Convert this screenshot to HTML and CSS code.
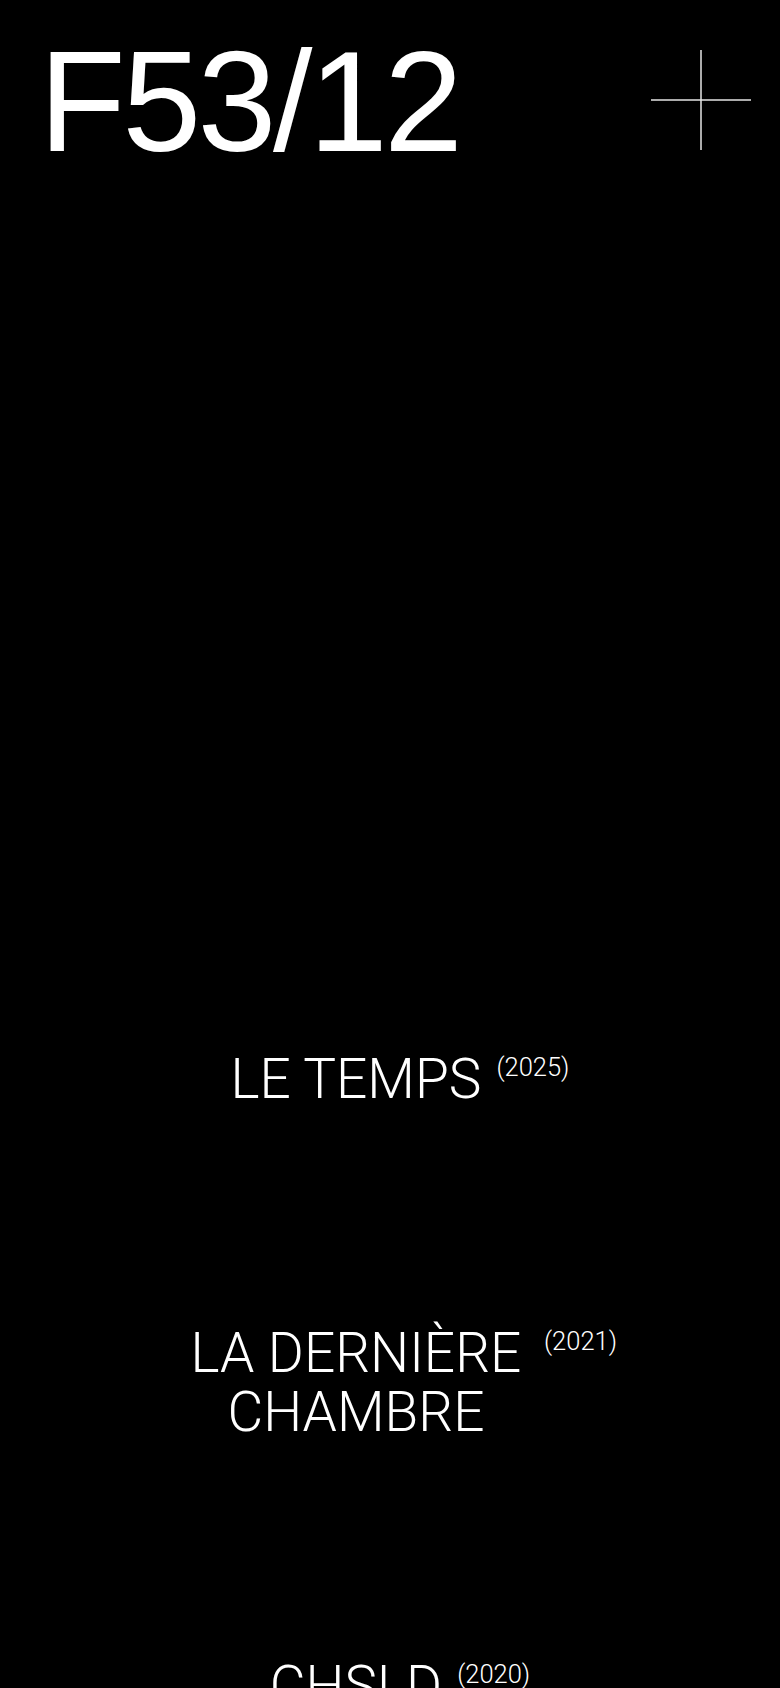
FILE: index.html
```html
<!DOCTYPE html>
<html lang="fr">
<head>
<meta charset="utf-8">
<title>F53/12</title>
<link rel="stylesheet" href="styles.css">
</head>
<body>
<header class="site-header">
  <div class="logo">F53/12</div>
  <button class="menu-toggle" aria-label="Menu">
    <svg viewBox="0 0 100 100" width="100" height="100" aria-hidden="true">
      <line x1="50" y1="0" x2="50" y2="100" />
      <line x1="0" y1="50" x2="100" y2="50" />
    </svg>
  </button>
</header>
<main class="works">
  <a class="work" href="#">
    <span class="work-title">LE TEMPS</span>
    <span class="work-year">(2025)</span>
  </a>
  <a class="work" href="#">
    <span class="work-title">LA DERNIÈRE CHAMBRE</span>
    <span class="work-year">(2021)</span>
  </a>
  <a class="work" href="#">
    <span class="work-title">CHSLD</span>
    <span class="work-year">(2020)</span>
  </a>
</main>
</body>
</html>
```
FILE: styles.css
```css
html, body {
  margin: 0;
  padding: 0;
  background: #000;
  color: #fff;
}

body {
  font-family: "Roboto", "Liberation Sans", Arial, sans-serif;
  min-height: 100vh;
}

.site-header {
  display: flex;
  justify-content: space-between;
  align-items: flex-start;
  padding: 31px 29px 0 39px;
}

.logo {
  font-family: "Liberation Sans", Arial, sans-serif;
  font-size: 142px;
  line-height: 142px;
  font-weight: 400;
  letter-spacing: -3.6px;
  color: #fff;
}

.menu-toggle {
  margin-top: 19px;
  padding: 0;
  border: 0;
  background: none;
  width: 100px;
  height: 100px;
  cursor: pointer;
}

.menu-toggle svg {
  display: block;
}

.menu-toggle line {
  stroke: #e6e6e6;
  stroke-width: 1.5;
}

.works {
  display: flex;
  flex-direction: column;
  align-items: center;
  gap: 215px;
  padding: 877px 0 200px 20px;
}

.work {
  display: flex;
  align-items: flex-start;
  gap: 15px;
  color: #fff;
  text-decoration: none;
}

.work-title {
  max-width: 346px;
  text-align: center;
  font-size: 55px;
  line-height: 59px;
  font-weight: 300;
}

.work-year {
  margin-top: 3px;
  font-size: 25.5px;
  line-height: 29px;
  font-weight: 300;
  white-space: nowrap;
}
```
